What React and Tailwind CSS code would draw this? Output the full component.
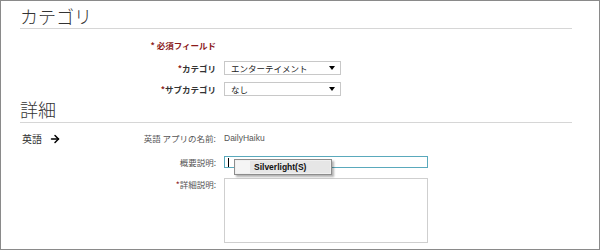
import { ArrowRight } from "lucide-react";

const jp = { fontFamily: '"Noto Sans CJK JP", "Noto Sans", sans-serif' };

function Select({ value }) {
  return (
    <div className="flex h-[14px] w-[117px] items-center justify-between border border-[#c8c8c8] bg-white pl-[6px] pr-[5px] text-[8.5px] text-[#222]">
      <span>{value}</span>
      <svg width="6" height="4" viewBox="0 0 6 4">
        <path d="M0 0h6L3 4z" fill="#000" />
      </svg>
    </div>
  );
}

function Row({ label, req, bold, children, className = "" }) {
  return (
    <div className={`grid grid-cols-[196px_1fr] gap-[8px] ${className}`}>
      <div className={`text-right text-[8.5px] ${bold ? "font-bold text-[#333]" : "text-[#555]"}`}>
        {req && <span className="text-[#8b1a1a]">*</span>}
        {label}
      </div>
      <div>{children}</div>
    </div>
  );
}

export default function App() {
  return (
    <div
      className="h-[250px] w-[600px] overflow-hidden border border-[#8a8a8a] bg-white pl-[19px] pr-[27px] text-[#333]"
      style={jp}
    >
      {/* カテゴリ */}
      <h2 className="border-b border-[#d6d6d6] pb-[2px] pt-[5px] text-[18px] font-light leading-[20px] text-[#333]">
        カテゴリ
      </h2>
      <div className="mt-[9px] grid grid-cols-[196px_1fr] gap-[8px]">
        <div className="text-right text-[8.5px] font-bold leading-[14px] text-[#8b1a1a]">* 必須フィールド</div>
      </div>
      <Row label="カテゴリ" req bold className="mt-[9px] items-center">
        <Select value="エンターテイメント" />
      </Row>
      <Row label="サブカテゴリ" req bold className="mt-[7px] items-center">
        <Select value="なし" />
      </Row>

      {/* 詳細 */}
      <h2 className="mt-[3px] border-b border-[#d6d6d6] pb-[2px] text-[18px] font-light leading-[21px] text-[#333]">
        詳細
      </h2>
      <div className="mt-[8px] grid grid-cols-[196px_1fr] items-center gap-[8px]">
        <div className="flex items-center justify-between text-[8.5px]">
          <div className="flex items-center gap-[7px] pl-[2px] text-[10px] text-[#333]">
            英語
            <ArrowRight size={12} strokeWidth={3} className="text-black" />
          </div>
          <span className="text-[#555]">英語 アプリの名前:</span>
        </div>
        <div className="text-[8.5px] text-[#555]" style={{ fontFamily: '"Liberation Sans", sans-serif' }}>
          DailyHaiku
        </div>
      </div>
      <Row label="概要説明:" className="mt-[10px]">
        <div className="relative">
          <div className="flex h-[12px] w-[204px] items-center border border-[#5aa9bc] pl-[3px]">
            <span className="h-[9px] w-px bg-black" />
          </div>
          <div className="absolute left-[10px] top-[3px] z-10 flex h-[16px] w-[98px] border border-[#8d8d8d] bg-[#f0f0f0] p-[1px] shadow-[2px_2px_2px_rgba(0,0,0,0.3)]">
            <div className="w-[14px] bg-[#f5f5f5]" />
            <div
              className="flex flex-1 items-center bg-[#e6e6e6] pl-[4px] text-[8.5px] font-bold text-[#111]"
              style={{ fontFamily: '"Liberation Sans", sans-serif' }}
            >
              Silverlight(S)
            </div>
          </div>
        </div>
      </Row>
      <Row label="詳細説明:" req className="mt-[9px]">
        <div className="h-[65px] w-[204px] border border-[#cfcfcf] bg-white" />
      </Row>
    </div>
  );
}
